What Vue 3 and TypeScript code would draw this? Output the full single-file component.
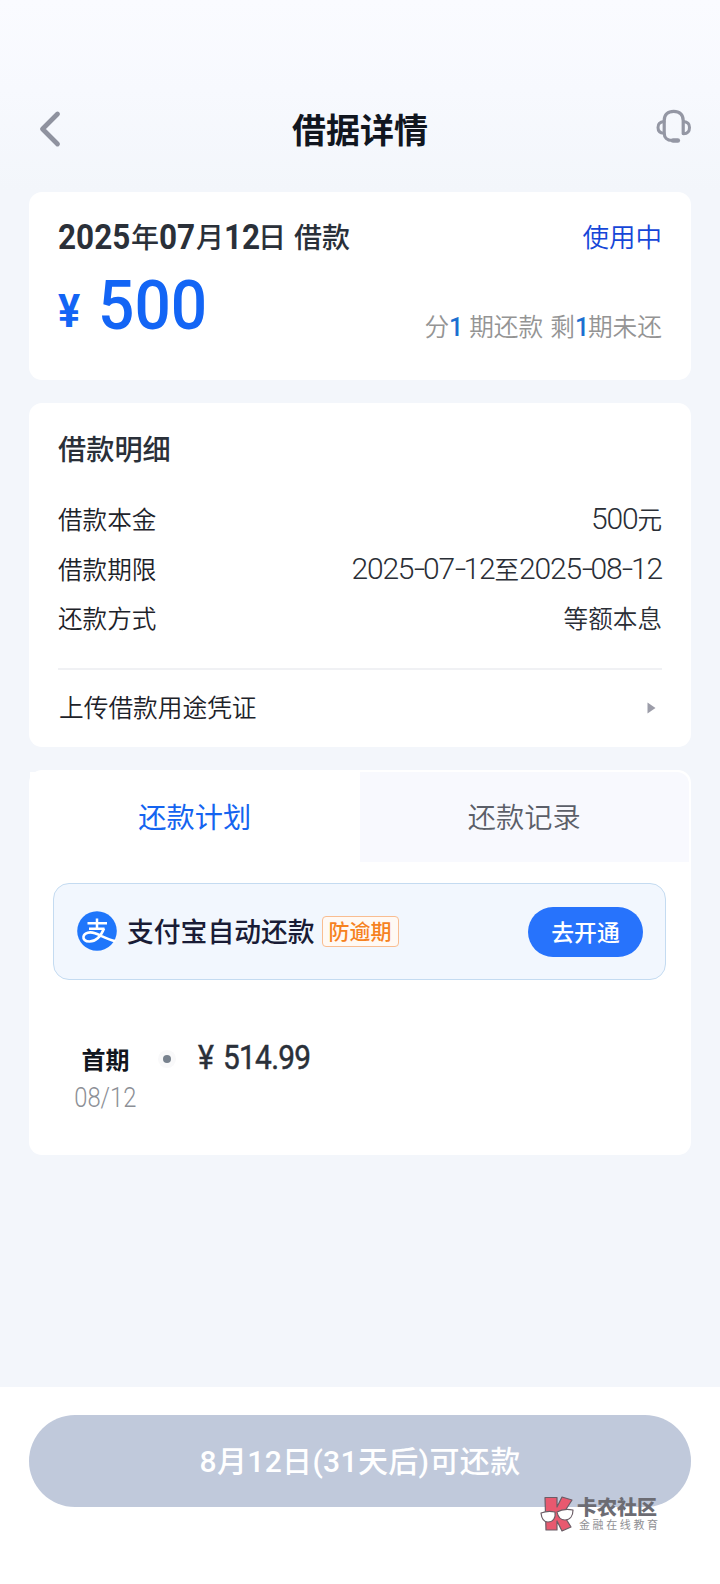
<script setup lang="ts">
interface Row {
  label: string
  parts: { text: string; num: boolean }[]
}

const rows: Row[] = [
  { label: '借款本金', parts: [{ text: '500', num: true }, { text: '元', num: false }] },
  {
    label: '借款期限',
    parts: [
      { text: '2025-07-12', num: true },
      { text: '至', num: false },
      { text: '2025-08-12', num: true },
    ],
  },
  { label: '还款方式', parts: [{ text: '等额本息', num: false }] },
]

// Separates hyphens from digit groups so the dashes can be drawn wider.
const pieces = (text: string): string[] => text.split(/(-)/)
</script>

<template>
  <div class="page">
    <header class="nav">
      <svg class="back" width="24" height="38" viewBox="0 0 24 38">
        <path d="M19.500 4 L4.500 19 L19.500 34" fill="none" stroke="#8f929f" stroke-width="4.800" stroke-linecap="round" stroke-linejoin="round" />
      </svg>
      <h1>借据详情</h1>
      <svg class="service" width="36" height="36" viewBox="0 0 36 36" fill="none" stroke="#9497a4" stroke-linecap="round" stroke-linejoin="round">
        <path d="M8.200 24 V11.500 C8.200 5.500 12 2.300 17.700 2.300 S27.200 5.500 27.200 11.500 V24.500 M8.200 24 C8.200 28.500 11 31.500 16 31.500" stroke-width="3.200" />
        <path d="M8 12.600 C4 13 2 15 2 18.400 S4 24 8 24.200 M27.500 12.600 C31.500 13 33.500 15 33.500 18.400 S31.500 24.500 27.500 24.700" stroke-width="3" />
        <path d="M17 31.500 H21.800" stroke-width="4.600" />
      </svg>
    </header>

    <main>
      <section class="card summary">
        <div class="line">
          <h2><b class="w4">2025</b>年<b class="w2">07</b>月<b class="w1">12</b>日<i></i>借款</h2>
          <span class="status">使用中</span>
        </div>
        <div class="line amount-line">
          <div class="amount"><span class="yen">¥</span><span class="value">500</span></div>
          <p class="terms">分<em>1</em><i></i>期还款<i></i>剩<em>1</em>期未还</p>
        </div>
      </section>

      <section class="card detail">
        <h3>借款明细</h3>
        <div v-for="row in rows" :key="row.label" class="row">
          <span>{{ row.label }}</span>
          <span class="val"><template v-for="(p, i) in row.parts" :key="i"><span v-if="p.num" class="num"><span v-for="(s, j) in pieces(p.text)" :key="j" :class="{ dash: s === '-' }">{{ s }}</span></span><template v-else>{{ p.text }}</template></template></span>
        </div>
        <div class="upload">
          <span>上传借款用途凭证</span>
          <svg width="9" height="12" viewBox="0 0 9 12"><path d="M0.500 0.500 L8.500 6 L0.500 11.500 Z" fill="#9c9da9" /></svg>
        </div>
      </section>

      <section class="card plan">
        <div class="tabs">
          <div class="tab active">还款计划</div>
          <div class="tab">还款记录</div>
        </div>
        <div class="banner">
          <svg width="40" height="40" viewBox="0 0 40 40">
            <circle cx="20" cy="20" r="19.800" fill="#1f76fb" />
            <g fill="none" stroke="#fff">
              <path d="M10.500 12.300 H30 M20 7.500 V17.500 M12 17.800 H27.500" stroke-width="2.500" />
              <path d="M27 17.500 C24 25 19 30.500 12.500 30.500 C8 30.500 6 28 6.500 25.500 C7.500 21.500 13 20.500 18 22.300 C24 24.500 30 28 38.500 30.300" stroke-width="2.600" />
            </g>
          </svg>
          <span class="pay">支付宝自动还款</span>
          <span class="tag">防逾期</span>
          <button>去开通</button>
        </div>
        <div class="period">
          <div class="when"><strong>首期</strong><span>08/12</span></div>
          <span class="dot"></span>
          <div class="due"><span class="y">¥</span><span class="sum">514.99</span></div>
        </div>
      </section>
    </main>

    <footer>
      <button class="repay">8月12日(31天后)可还款</button>
      <div class="mark">
        <svg width="36" height="36" viewBox="0 0 36 36" stroke="#6b5d66" stroke-width="1.200" stroke-linejoin="round">
          <path d="M6 1.500 H18 V11 L23 1 L33 4 L24 18 L32 31 L23 35 L18 25 V34 H7 Z" fill="#e8596f" />
          <path d="M2 17 C7 15 12 15 16 16 C17 22 14 26 9 26 C5 26 2.500 22 2 17 Z M18 16 C23 13 29 13 34 14 C34 20 31 24 26 24 C22 24 19 21 18 16 Z" fill="#fff" />
        </svg>
        <div><strong>卡农社区</strong><span>金融在线教育</span></div>
      </div>
    </footer>
  </div>
</template>

<style>
body {
  margin: 0;
}
</style>

<style scoped>
.page {
  width: 720px;
  height: 1584px;
  display: flex;
  flex-direction: column;
  box-sizing: border-box;
  overflow: hidden;
  background: linear-gradient(#fafbff 0, #f7f9fe 90px, #f3f6fb 190px);
  font-family: 'Noto Sans CJK SC', sans-serif;
  color: #2a3039;
}
h1, h2, h3, p { margin: 0; font-weight: 500; }
i { display: inline-block; }
button { border: 0; padding: 0; font-family: inherit; color: #fff; }
.nav {
  height: 192px;
  box-sizing: border-box;
  padding: 66px 28px 0 38px;
  display: grid;
  grid-template-columns: 40px 1fr 36px;
  align-items: center;
  align-content: start;
  grid-auto-rows: 126px;
}
.nav h1 { text-align: center; font-size: 34px; line-height: 50px; font-weight: 700; color: #11161f; padding: 0 14px 1px 0; }
.service { margin-bottom: 5px; }
main { flex: 1; padding: 0 29px; }
.card { background: #fff; border-radius: 13px; box-sizing: border-box; }
.line { display: flex; justify-content: space-between; }
.summary { height: 188px; padding: 24px 29px 0; margin-bottom: 23px; }
.summary h2 { font-size: 28px; line-height: 40px; white-space: nowrap; }
.summary h2 b { display: inline-block; font-family: Roboto, sans-serif; font-size: 35px; font-weight: 700; line-height: 40px; transform: translateY(1px) scaleX(0.9); transform-origin: left; }
.w4 { width: 73px; }
.w2 { width: 37px; }
.w1 { width: 34px; }
.summary h2 i { width: 8px; }
.status { font-size: 26.500px; line-height: 40px; color: #1546d8; font-weight: 350; }
.amount-line { height: 90px; }
.amount { display: flex; align-items: baseline; color: #1365f5; font-family: Roboto, sans-serif; line-height: 98px; }
.yen { font-size: 46px; font-weight: 700; width: 40px; line-height: 98px; transform: translateY(-2px) scaleX(0.9); transform-origin: left; }
.value { font-size: 68.500px; font-weight: 500; transform: scaleX(0.935); transform-origin: left; }
.terms { font-size: 24.700px; font-weight: 350; color: #949494; line-height: 36px; padding-top: 50px; white-space: nowrap; }
.terms em { font: 500 25px/36px Roboto, sans-serif; color: #1c6fd0; letter-spacing: -1.200px; }
.terms i { width: 7px; }
.detail { height: 344px; padding: 25px 29px 0; margin-bottom: 23px; }
.detail h3 { font-size: 28.200px; line-height: 40px; margin-bottom: 25px; }
.row { display: flex; justify-content: space-between; height: 49.700px; line-height: 50px; font-size: 24.600px; font-weight: 350; color: #1d2229; }
.val { white-space: nowrap; color: #2a2e36; }
.num { font-family: Roboto, sans-serif; font-size: 30px; letter-spacing: -1.200px; font-weight: 300; }
.dash { display: inline-block; line-height: 30px; transform: scaleX(1.35); margin: 0 0.600px 0 1.700px; }
.upload {
  border-top: 2px solid #f0f1f4;
  margin-top: 26px;
  height: 74px;
  padding: 0 6px 0 1px;
  display: flex;
  align-items: center;
  justify-content: space-between;
  font-size: 24.700px;
  line-height: 36px;
  font-weight: 350;
  color: #1d2229;
}
.upload span { padding-bottom: 3px; }
.upload svg { margin-top: 2px; }
.plan { height: 385px; }
.tabs { display: flex; padding: 2px 2px 0 1px; height: 90px; }
.tab { flex: 1; text-align: center; font-size: 28.200px; line-height: 88px; height: 90px; color: #5b5f69; background: #f8f9fe; font-weight: 350; border-radius: 0 12px 0 0; }
.tab.active { color: #1464f0; background: #fff; font-weight: 400; box-shadow: 12px 0 0 -0.100px transparent; }
.banner {
  margin: 21px 25px 0 24px;
  height: 97px;
  box-sizing: border-box;
  border: 1.500px solid #c4dbf1;
  border-radius: 16px;
  background: #f2f7fe;
  display: flex;
  align-items: center;
  padding: 0 22px 0 23px;
}
.banner svg { margin-bottom: 1px; }
.pay { font-size: 26.800px; color: #191c36; margin-left: 10px; padding-bottom: 2px; font-weight: 500; white-space: nowrap; }
.tag { border: 1.500px solid #f9bd91; border-radius: 4px; font-size: 21px; line-height: 27px; padding: 0 6px 2px; margin-left: 7px; color: #f6821f; background: #fff9f4; font-weight: 500; white-space: nowrap; }
.banner button { margin-left: auto; width: 115px; height: 50px; border-radius: 26px; background: #2773fc; font-size: 22.800px; font-weight: 500; }
.period { display: flex; padding: 56px 0 0 46px; }
.when { width: 61px; display: flex; flex-direction: column; align-items: center; }
.when strong { font-size: 24px; line-height: 46px; height: 44px; color: #12161e; }
.when span { font: 300 27px/36px Roboto, sans-serif; color: #8c8f96; transform: scaleX(0.88); }
.dot { width: 8px; height: 8px; border-radius: 50%; background: #78828e; margin: 19px 0 0 27px; box-shadow: 0 0 0 5px #f9f9fa; }
.due { font: 400 33.500px/44px Roboto, sans-serif; display: flex; margin-left: 27px; -webkit-text-stroke: 0.500px #2a3039; }
.y { width: 25px; transform: scaleX(0.9); transform-origin: left; }
.sum { letter-spacing: -0.800px; transform: scaleX(0.89); transform-origin: left; }
footer { height: 197px; box-sizing: border-box; padding: 28px 29px 0; background: #fff; position: relative; }
.repay { width: 662px; height: 92px; border-radius: 46px; padding-bottom: 4px; background: #c0c9db; font-family: Roboto, 'Noto Sans CJK SC', sans-serif; font-size: 30px; font-weight: 500; letter-spacing: 0.350px; }
.mark { position: absolute; left: 539px; top: 109px; display: flex; }
.mark div { display: flex; flex-direction: column; padding-left: 2px; }
.mark strong { font-size: 20px; line-height: 22px; font-weight: 900; color: #6c6c73; }
.mark span { font-size: 11px; line-height: 12px; letter-spacing: 2.600px; color: #909094; white-space: nowrap; padding-left: 2px; }
</style>
